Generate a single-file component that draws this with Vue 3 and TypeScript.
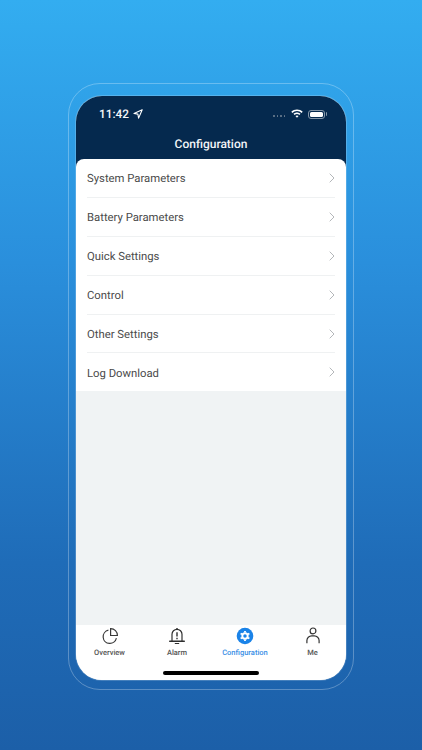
<script setup lang="ts">
interface Tab {
  label: string
  icon: string
  active?: boolean
}

const rows: string[] = [
  'System Parameters',
  'Battery Parameters',
  'Quick Settings',
  'Control',
  'Other Settings',
  'Log Download'
]

const tabs: Tab[] = [
  { label: 'Overview', icon: 'overview' },
  { label: 'Alarm', icon: 'alarm' },
  { label: 'Configuration', icon: 'config', active: true },
  { label: 'Me', icon: 'me' }
]
</script>

<template>
  <div class="page">
    <div class="bezel">
      <div class="screen">
        <header class="head">
          <div class="status">
            <div class="time">
              <span>11:42</span>
              <svg width="10" height="10" viewBox="0 0 10 10" fill="none" stroke="#fff" stroke-width="1.100" stroke-linejoin="round">
                <path d="M9.200.8 1 4.500l3.900.6.700 4z" />
              </svg>
            </div>
            <div class="status-right">
              <span class="dots"><i></i><i></i><i></i><i></i></span>
              <svg width="12" height="10" viewBox="0 0 13 10" fill="#fff">
                <path d="M6.500 0C4.100 0 1.900 .9.300 2.500l1.200 1.300C2.800 2.500 4.600 1.700 6.500 1.700s3.700.8 5 2.100l1.200-1.300C11.100.9 8.900 0 6.500 0z" />
                <path d="M6.500 3.300c-1.500 0-2.800.6-3.800 1.500l1.200 1.300c.7-.7 1.600-1.100 2.600-1.100s1.900.4 2.600 1.100l1.200-1.300c-1-.9-2.300-1.500-3.800-1.500z" />
                <path d="M6.500 6.500c-.7 0-1.300.3-1.700.7l1.700 1.900 1.700-1.900c-.4-.4-1-.7-1.700-.7z" />
              </svg>
              <span class="battery"><b></b></span>
            </div>
          </div>
          <h1 class="title">Configuration</h1>
        </header>

        <main class="content">
          <ul class="list">
            <li v-for="row in rows" :key="row" class="row">
              <span class="row-label">{{ row }}</span>
              <svg width="6" height="10" viewBox="0 0 6 10" fill="none" stroke="#b4b7ba" stroke-width="1">
                <path d="M.7.700 5 5 .7 9.300" />
              </svg>
            </li>
          </ul>
        </main>

        <nav class="tabbar">
          <div class="tabs">
            <div v-for="tab in tabs" :key="tab.label" class="tab" :class="{ active: tab.active }">
              <svg v-if="tab.icon === 'overview'" width="18" height="18" viewBox="0 0 18 18" fill="none" stroke="#3a3a3a" stroke-width="1.200">
                <path d="M7.400 3.200a6.700 6.700 0 1 0 8 8" />
                <path d="M9.600 1.600a6.700 6.700 0 0 1 6.800 6.900H9.600z" />
              </svg>
              <svg v-else-if="tab.icon === 'alarm'" width="18" height="18" viewBox="0 0 18 18" fill="none" stroke="#2f2f2f" stroke-width="1.200">
                <path d="M4 14.200V7.300a5 5 0 0 1 10 0v6.900" />
                <path d="M1.700 14.300h14.600" stroke-linecap="round" stroke-width="1.400" />
                <path d="M7.300 16.500h3.400" stroke-linecap="round" />
                <path d="M9 1v1.300" stroke-width="1.400" />
                <path d="M9 5.300v4.200M9 10.700v1.500" stroke-width="1.400" />
              </svg>
              <svg v-else-if="tab.icon === 'config'" width="18" height="18" viewBox="0 0 18 18">
                <circle cx="9" cy="9" r="8.300" fill="#1a83e8" />
                <circle cx="9" cy="9" r="2.700" fill="none" stroke="#fff" stroke-width="1.900" />
                <path d="M9 3.900v1.700M9 12.400v1.700M4.600 6.450l1.500.87M11.900 10.680l1.500.87M4.600 11.550l1.500-.87M11.900 7.320l1.500-.87" stroke="#fff" stroke-width="1.800" fill="none" />
              </svg>
              <svg v-else width="18" height="18" viewBox="0 0 18 18" fill="none" stroke="#333" stroke-width="1.200">
                <circle cx="9" cy="3.900" r="2.900" />
                <path d="M2.900 16.300v-2.700A4.800 4.800 0 0 1 7.700 8.800h2.600a4.800 4.800 0 0 1 4.800 4.800v2.700" />
              </svg>
              <span>{{ tab.label }}</span>
            </div>
          </div>
          <div class="home-bar"></div>
        </nav>
      </div>
    </div>
  </div>
</template>

<style>
body {
  margin: 0;
}
</style>

<style scoped>
.page {
  box-sizing: border-box;
  width: 422px;
  height: 750px;
  overflow: hidden;
  padding: 83px 68px 0;
  background: linear-gradient(180deg, #33adf0 0%, #2a8fdc 35%, #1f6cb8 75%, #1c5fa8 100%);
  font-family: Roboto, "Liberation Sans", sans-serif;
  text-rendering: geometricPrecision;
}

.bezel {
  box-sizing: border-box;
  width: 286px;
  height: 607px;
  padding: 12px 7px 9px;
  border: 1.500px solid rgba(255, 255, 255, 0.28);
  border-radius: 32px;
}

.screen {
  display: flex;
  flex-direction: column;
  height: 100%;
  overflow: hidden;
  border-radius: 26px;
  background: #f0f3f4;
  box-shadow: 0 0 0 1px rgba(255, 255, 255, 0.18);
}

.head {
  height: 63px;
  flex: none;
  background: #05294e;
  color: #fff;
}

.status {
  display: flex;
  align-items: center;
  justify-content: space-between;
  padding: 10px 21px 0 23px;
  height: 16px;
}

.time {
  display: flex;
  align-items: center;
  gap: 4px;
  font-size: 11.800px;
  font-weight: 500;
  color: #f4f7fa;
}

.status-right {
  display: flex;
  align-items: center;
  gap: 5px;
}

.dots {
  display: flex;
  gap: 2px;
  margin-right: 1px;
  margin-top: 4px;
}

.dots i {
  width: 1.500px;
  height: 1.500px;
  border-radius: 50%;
  background: #6a7c90;
}

.battery {
  position: relative;
  box-sizing: border-box;
  width: 17px;
  height: 9px;
  padding: 1px;
  border: 1px solid #8596a8;
  border-radius: 3px;
}

.battery b {
  display: block;
  height: 100%;
  border-radius: 1.500px;
  background: #fff;
}

.battery::after {
  content: '';
  position: absolute;
  right: -3px;
  top: 1.500px;
  width: 1.500px;
  height: 4px;
  border-radius: 0 1px 1px 0;
  background: #8596a8;
}

.title {
  margin: 14px 0 0;
  text-align: center;
  font-size: 12px;
  line-height: 16px;
  font-weight: 500;
  color: #f2f5f8;
}

.content {
  flex: 1;
  min-height: 0;
  background: linear-gradient(#05294e 8px, transparent 8px);
}

.list {
  margin: 0;
  padding: 0;
  list-style: none;
  overflow: hidden;
  border-radius: 8px 8px 0 0;
  background: #fff;
}

.row {
  box-sizing: border-box;
  display: flex;
  align-items: center;
  justify-content: space-between;
  height: 38.900px;
  margin: 0 11px;
  border-bottom: 1px solid #eff1f2;
  font-size: 11.300px;
  color: #4a4a4a;
}

.row-label {
  padding-top: 2px;
}

.row:last-child {
  height: 38px;
  border-bottom: none;
}

.tabbar {
  flex: none;
  height: 55px;
  background: #fff;
}

.tabs {
  display: grid;
  grid-template-columns: 67px 68px 68px 67px;
  padding-top: 2px;
}

.tab {
  display: flex;
  flex-direction: column;
  align-items: center;
  gap: 3px;
  font-size: 7.500px;
  line-height: 9px;
  font-weight: 500;
  color: #555;
}

.tab.active {
  color: #3a8fe6;
}

.home-bar {
  width: 96px;
  height: 3.500px;
  margin: 14px auto 0;
  border-radius: 2px;
  background: #000;
}
</style>
